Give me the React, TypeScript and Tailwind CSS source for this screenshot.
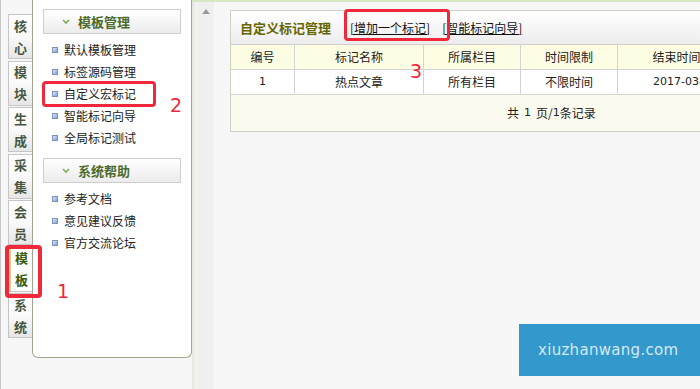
const tabs = [
  ["核", "心"],
  ["模", "块"],
  ["生", "成"],
  ["采", "集"],
  ["会", "员"],
  ["模", "板"],
  ["系", "统"],
];

const sections = [
  { title: "模板管理", items: ["默认模板管理", "标签源码管理", "自定义宏标记", "智能标记向导", "全局标记测试"] },
  { title: "系统帮助", items: ["参考文档", "意见建议反馈", "官方交流论坛"] },
];

const cjk = { fontFamily: '"Noto Sans CJK SC", "DejaVu Sans", sans-serif' };
const latin = { fontFamily: '"DejaVu Sans", sans-serif', fontSize: "11px" };

function Bullet() {
  return <span className="inline-block w-[6px] h-[6px] border border-[#7f93b8] bg-gradient-to-br from-[#dfe9fb] to-[#7d9fd8]" />;
}

function Chevron() {
  return (
    <svg width="8" height="6" viewBox="0 0 8 6" className="shrink-0">
      <path d="M1 1 L4 4 L7 1" fill="none" stroke="#7fae5a" strokeWidth="1.6" />
    </svg>
  );
}

export default function App() {
  return (
    <div className="relative w-[700px] h-[389px] overflow-hidden bg-[#f7f7f7] border-l border-[#c8c8c8] text-[#222]" style={cjk}>
      <div className="flex h-full">
        {/* side tabs */}
        <div className="w-[31px] shrink-0 pt-[14px] pl-[7px] flex flex-col gap-[1.5px]">
          {tabs.map((t, i) => {
            const active = i === 5;
            return (
              <div
                key={i}
                className={`h-[45px] border border-r-0 border-[#c5c5c5] flex flex-col items-center justify-center text-[13px] font-bold leading-[22px] ${
                  active
                    ? "bg-white border-l-[3px] border-l-[#bcd98e] text-[#3a5a08]"
                    : "bg-gradient-to-b from-white via-[#fafafa] to-[#e6e6e6] text-[#48573f]"
                }`}
              >
                <span>{t[0]}</span>
                <span>{t[1]}</span>
              </div>
            );
          })}
        </div>

        {/* left menu panel */}
        <div className="w-[160px] h-[358px] bg-white border border-t-0 border-[#a5a58e] rounded-b-[6px] px-[10px] pt-[9px] shrink-0">
          {sections.map((s, si) => (
            <div key={si} className={si > 0 ? "mt-[9px]" : ""}>
              <div className="h-[25px] border border-[#cfcfcf] bg-gradient-to-b from-white to-[#ececec] flex items-center pl-[18px] gap-[8px]">
                <Chevron />
                <span className="text-[13px] font-bold text-[#4d6b2b]">{s.title}</span>
              </div>
              <div className="pt-[5px] pl-[9px]">
                {s.items.map((it) => (
                  <div key={it} className="h-[22px] flex items-center gap-[6px] text-[12px] text-[#222]">
                    <Bullet />
                    <span>{it}</span>
                  </div>
                ))}
              </div>
            </div>
          ))}
        </div>

        {/* scroll strip */}
        <div className="w-[22px] h-full flex shrink-0 border-t-2 border-[#d9e8c4]">
          <div className="w-[5px] h-full bg-gradient-to-r from-[#e6e6e0] to-[#f5f5f5]" />
          <div className="w-[17px] h-full bg-[#f0f0f0] flex justify-center pt-[7px]">
            <svg width="8" height="5" viewBox="0 0 8 5">
              <path d="M0 5 L4 0 L8 5 Z" fill="#9a9a9a" />
            </svg>
          </div>
        </div>

        {/* main */}
        <div className="flex-1 min-w-0 h-full border-t-2 border-[#d9e8c4] pl-[16px] pt-[8px]">
          <div className="w-[680px] border border-[#cfcfc4] bg-[#fafaee]">
            <div className="h-[34px] bg-gradient-to-b from-white to-[#ededed] flex items-center pl-[9px] border-b border-[#d0d0d0]">
              <span className="text-[13px] font-bold text-[#666600]">自定义标记管理</span>
              <a className="ml-[19px] text-[12px] text-[#111] underline">[增加一个标记]</a>
              <a className="ml-[12px] text-[12px] text-[#111] underline">[智能标记向导]</a>
            </div>
            <div className="grid grid-cols-[64px_129px_97px_97px_118px_1fr] text-[12px]">
              {["编号", "标记名称", "所属栏目", "时间限制", "结束时间", "操作"].map((h) => (
                <div key={h} className="h-[25px] bg-[#fdfde4] border-r border-b border-[#d4d4d4] flex items-center justify-center">
                  {h}
                </div>
              ))}
              {["1", "热点文章", "所有栏目", "不限时间", "2017-03-01", "修改 删除"].map((c) => (
                <div
                  key={c}
                  className={`h-[25px] bg-white border-r border-b border-[#d4d4d4] flex items-center ${c.startsWith("2017") ? "justify-start pl-[35px]" : "justify-center"}`}
                  style={c.startsWith("2017") || c === "1" ? latin : undefined}
                >
                  {c}
                </div>
              ))}
            </div>
            <div className="h-[36px] flex items-center pl-[276px] text-[12px]">
              共 <span className="mx-[5px]" style={latin}>1</span> 页/<span style={latin}>1</span>条记录
            </div>
          </div>
        </div>
      </div>

      {/* annotations */}
      <div className="absolute left-[41px] top-[81px] w-[114px] h-[26px] border-[3px] border-[#f0283c] rounded-[4px]" />
      <div className="absolute left-[169px] top-[96px] text-[19px] leading-none text-[#f0283c]" style={{ fontFamily: '"DejaVu Sans", sans-serif' }}>2</div>
      <div className="absolute left-[4px] top-[245px] w-[37px] h-[53px] border-[4px] border-[#f0283c] rounded-[4px]" />
      <div className="absolute left-[56px] top-[282px] text-[19px] leading-none text-[#f0283c]" style={{ fontFamily: '"DejaVu Sans", sans-serif' }}>1</div>
      <div className="absolute left-[343px] top-[9px] w-[106px] h-[32px] border-[3px] border-[#f0283c] rounded-[4px]" />
      <div className="absolute left-[409px] top-[62px] text-[19px] leading-none text-[#f0283c]" style={{ fontFamily: '"DejaVu Sans", sans-serif' }}>3</div>

      {/* watermark */}
      <div className="absolute left-[518px] top-[324px] w-[190px] h-[52px] bg-[#3399cc] flex items-center pl-[19px] text-[15px] tracking-[0.3px] text-[#d4e8f4]" style={{ fontFamily: '"DejaVu Sans", sans-serif' }}>
        xiuzhanwang.com
      </div>
    </div>
  );
}
